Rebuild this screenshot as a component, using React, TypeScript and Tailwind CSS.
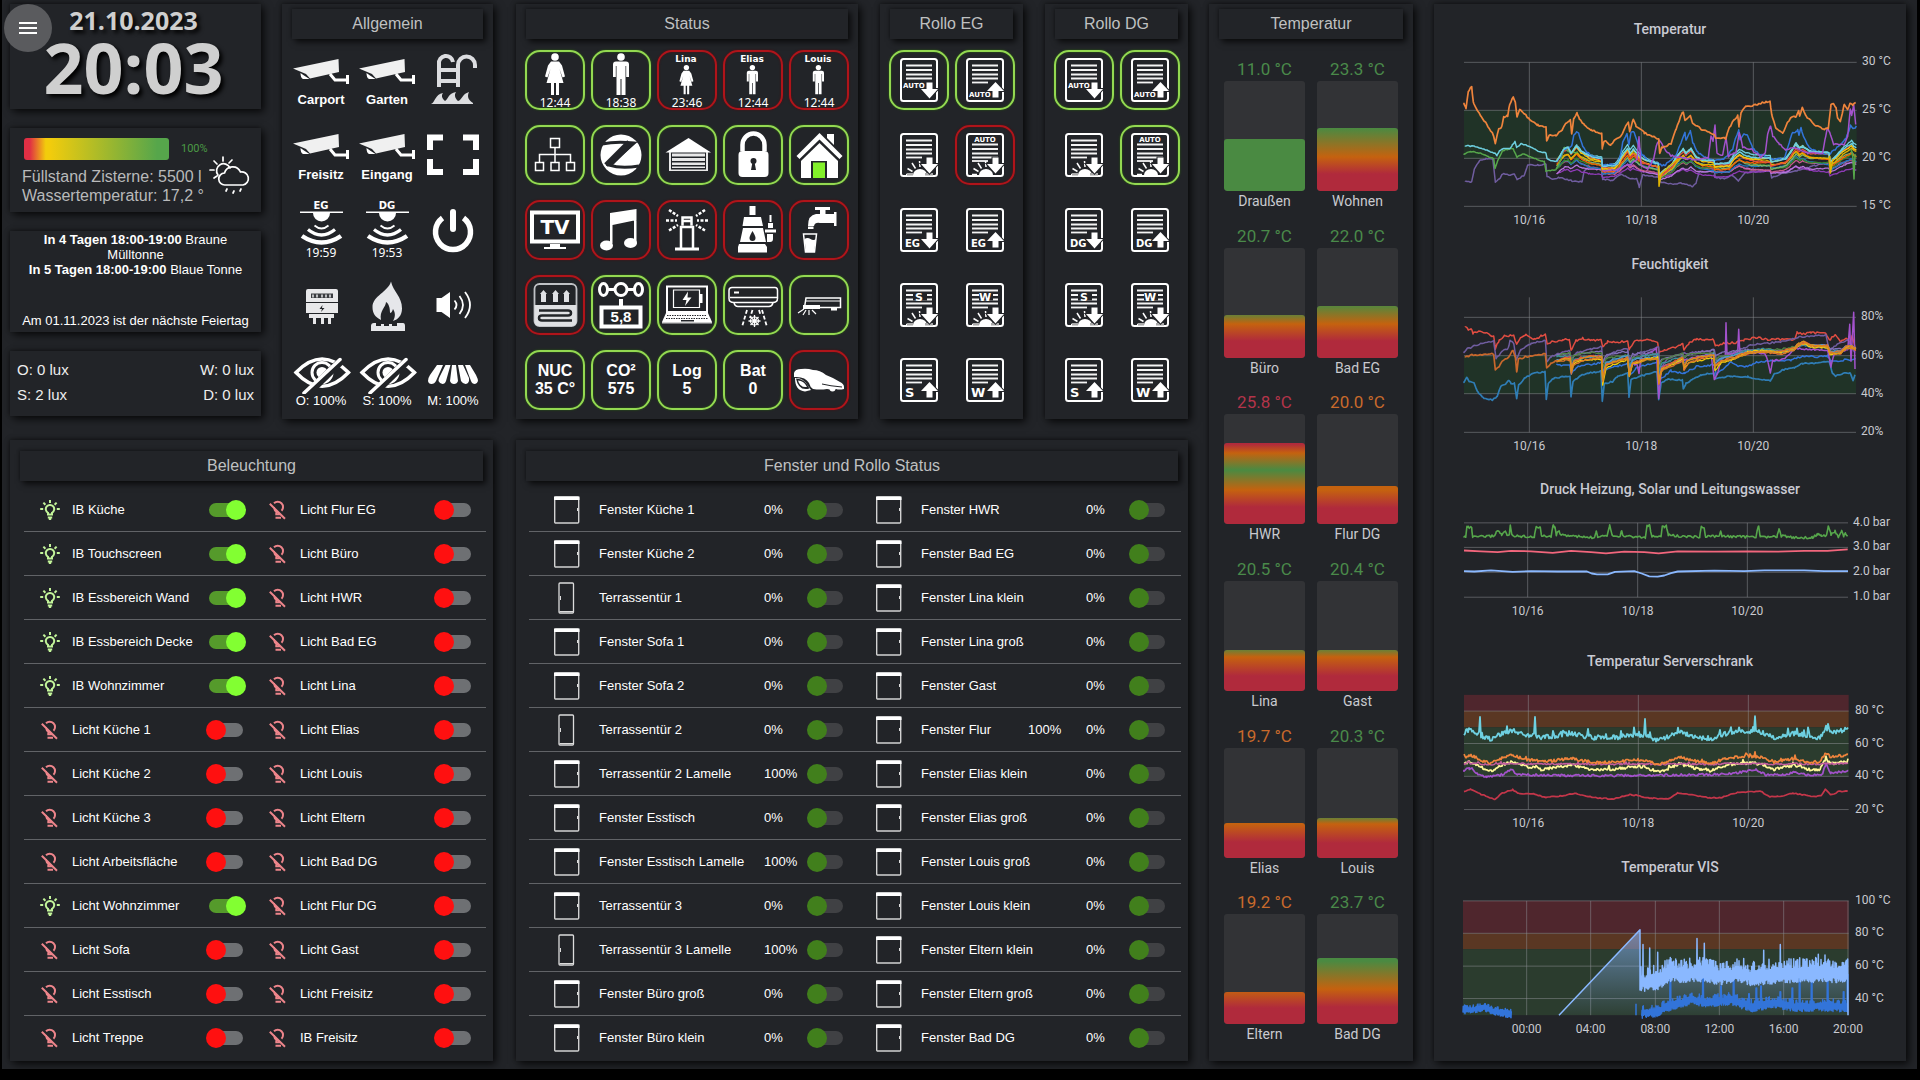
import React from "react";

type Pt = [number, number];

/* ---------- shared pieces ---------- */

const PANEL = "bg-[#222428] shadow-[3px_3px_8px_rgba(0,0,0,0.75),-1px_-1px_4px_rgba(0,0,0,0.35)]";

function Heading({ children }: { children: React.ReactNode }) {
  return (
    <h2 className="mx-2.5 flex h-[30px] items-center justify-center text-base leading-5 text-[#bfc0c1] shadow-[3px_3px_6px_rgba(0,0,0,0.7),-1px_-1px_3px_rgba(0,0,0,0.3)]">
      {children}
    </h2>
  );
}

function Art({ children, h = 60 }: { children: React.ReactNode; h?: number }) {
  return (
    <svg viewBox={`0 0 60 ${h}`} width="60" height={h} fill="#fff" className="block shrink-0" aria-hidden="true">
      {children}
    </svg>
  );
}

/* ---------- Allgemein icons ---------- */

function Camera() {
  return (
    <Art h={40}>
      <path d="M2 15.500 47.500 6 48 19 19 25.500 15 21Z" fill="#f0f0f0" />
      <path d="M9.500 20 13 22.500 18.500 26H12Q9.500 25 9.500 20Z" />
      <path d="m39 21 5 6h11" fill="none" stroke="#fff" strokeWidth="3" />
      <path d="M55 22h3v9h-3z" />
    </Art>
  );
}

function PoolLadder() {
  return (
    <Art>
      <g fill="none" stroke="#dcdde0" strokeWidth="4">
        <path d="M16 37V14a7 7 0 0 1 14-2M35 37V15a8.500 8.500 0 0 1 17 0v3M16 20h19M16 31h19" />
      </g>
      <path
        fill="#dcdde0"
        d="M8 54c4-1 4-10 12-11-2 3-1 5 2 8 3-1 3-8 11-9-2 3-1 6 2 9 4-1 4-7 11-9-2 4-1 8 4 11v1z"
      />
    </Art>
  );
}

function Fullscreen() {
  return (
    <Art>
      <path d="M4 25V9.500h16v6H10V25zM56 25V9.500H40v6h10V25zM4 34v16h16v-6H10V34zM56 34v16H40v-6h10V34z" />
    </Art>
  );
}

function Power() {
  return (
    <Art>
      <g fill="none" stroke="#fff">
        <path d="M19.500 18a17.500 17.500 0 1 0 21 0" strokeWidth="5.500" />
        <path d="M30 12v17" strokeWidth="6" strokeLinecap="round" />
      </g>
    </Art>
  );
}

function Motion({ label, time }: { label: string; time: string }) {
  return (
    <Art>
      <text x="30" y="9" textAnchor="middle" fontSize="10" className="font-['DejaVu_Sans'] font-bold">{label}</text>
      <path d="M9 11.500h43v1.500H9z" />
      <path d="M22 13h17a8.500 8.500 0 0 1-17 0z" />
      <g fill="none" stroke="#fff">
        <path d="M23.500 25.500q7 6 14 0" strokeWidth="1.800" />
        <path d="M17 29.500q13.500 11 27 0" strokeWidth="3.200" />
        <path d="M11 36q19.500 13 39 0" strokeWidth="4.500" />
      </g>
      <text x="30" y="57" textAnchor="middle" fontSize="12" className="font-['Noto_Sans']">{time}</text>
    </Art>
  );
}

function Meter() {
  return (
    <Art>
      <g fill="#e8e8ea">
        <path d="M15 16q0-2 2-2h28q2 0 2 2v11H15zM15 28h32v10H15zM18 39h25v4H18zM22 43h3v6h-3zM30 43h3v6h-3zM37 43h3v6h-3z" />
      </g>
      <path d="M20 18.500h22v4.500H20z" fill="#3a3c40" />
      <path d="M22 19.500v3M26 19.500v3M31 19.500v3M35 19.500v3M39 19.500v3" stroke="#e8e8ea" strokeWidth="1.500" />
      <path d="m31.500 30-3 4h2.500l-1 3 3.500-4H31z" fill="#222428" />
    </Art>
  );
}

function Flame() {
  return (
    <Art>
      <g fill="#e6e7ea">
        <path d="M34 6.500c2 10 11 15 11 27 0 7-4 11-9 12.500 3-5 2-9 0-12-1 3-2 4-3 4 0-5-1-9-4-11 0 5-7 9-5 18C18 42 15.500 38 15.500 32 15.500 21 31 17 34 6.500z" />
        <path d="M14 56v-5q0-3 3-3h2v3h5v-2h3v2h5v-2h3v2h5v-3h6q2 0 2 3v5z" />
      </g>
    </Art>
  );
}

function Speaker() {
  return (
    <Art>
      <path d="M13.500 23h5L27 17v26l-8.500-6h-5z" />
      <g fill="none" stroke="#fff" strokeWidth="1.800">
        <path d="M31.500 25.500q4 4.500 0 9M36.500 21q7 9 0 18M42 17q10 13 0 26" />
      </g>
    </Art>
  );
}

function EyeOff() {
  return (
    <Art h={42}>
      <path d="M5 20.500Q31 -6.500 57.500 20.500 31 48 5 20.500z" fill="none" stroke="#fff" strokeWidth="3.500" />
      <circle cx="31" cy="20.500" r="10" fill="none" stroke="#fff" strokeWidth="3" />
      <circle cx="31" cy="20.500" r="5.500" />
      <path d="M51 8 15 43" stroke="#222428" strokeWidth="8" />
      <path d="m49 7.500-36 33.500" stroke="#fff" strokeWidth="3.500" strokeLinecap="round" />
    </Art>
  );
}

function Awning() {
  return (
    <Art h={42}>
      <path d="M14 13h6L13 29q-1.500 3-4.500 3T5 29q0-3 2-6zM22.500 13h5L23 29q-1 3-3.500 3T15.500 29q0-2 1-4zM29 13h4l2 16q-1 3-4 3t-4-3zM35 13h5l6 13v3q-1 3-3.500 3T38 29zM42 13h5l6 10q2 4 2 6-1 3-3 3-3 0-4-3z" />
    </Art>
  );
}

/* ---------- Status icons ---------- */

function Woman() {
  return (
    <g>
      <circle cx="30" cy="7" r="3.800" />
      <path d="M26 11.500h8l3 4 3 11-2.500 1L34.500 19l4 14h-4.500v12h-3V33h-2v12h-3V33h-4.500l4-14-3 8.500-2.500-1 3-11z" />
    </g>
  );
}

function Man() {
  return (
    <g>
      <circle cx="30" cy="7" r="3.800" />
      <path d="M25 11.500h10q3 0 3 3V27h-2.800V16H34.500v29h-4V29h-1v16h-4V16h-.700v11H22V14.500q0-3 3-3z" />
    </g>
  );
}

function Person({ kind, name, time }: { kind: "w" | "m"; name?: string; time: string }) {
  const body = kind === "w" ? <Woman /> : <Man />;
  return (
    <Art>
      {name ? (
        <>
          <text x="29" y="12" textAnchor="middle" fontSize="9" className="font-['DejaVu_Sans'] font-bold">{name}</text>
          <g transform="translate(8.400 12.700) scale(.7)">{body}</g>
        </>
      ) : (
        body
      )}
      <text x="30" y="57" textAnchor="middle" fontSize="12" className="font-['Noto_Sans']">{time}</text>
    </Art>
  );
}

function Network() {
  return (
    <Art>
      <g fill="none" stroke="#fff" strokeWidth="1.500">
        <path d="M25.500 13.500h9v9h-9zM10.500 37.500h8v8h-8zM26 37.500h8v8h-8zM41.500 37.500h8v8h-8zM30 22.500v15M14.500 37.500v-8h31v8" />
      </g>
    </Art>
  );
}

function Zigbee() {
  return (
    <Art>
      <circle cx="30" cy="30" r="20.500" />
      <path d="M11 19q14-3 32-1L18 40q12 4 30 1" fill="none" stroke="#222428" strokeWidth="3" />
      <path d="M39 17.500h6L21 41h-6z" fill="#222428" />
      <path d="M38 17 15 40" stroke="#222428" strokeWidth="5" />
    </Art>
  );
}

function Garage() {
  return (
    <Art>
      <path d="M8.500 27.500 31.500 13 54 27.500z" />
      <path d="M12 27h2v19h-2zM49 27h2v19h-2zM15 28.500h33v3H15zM15 33h33v3H15zM15 37.500h33v2.500H15zM15 41.500h33v1.500H15zM14 44.500h35V46H14z" fill="#e8e8e8" />
    </Art>
  );
}

function Lock() {
  return (
    <Art>
      <path d="M19.500 26V20a10.500 11 0 0 1 22 0v6" fill="none" stroke="#fff" strokeWidth="4.500" />
      <rect x="15.500" y="26" width="30" height="26" rx="4" />
      <circle cx="30.500" cy="36" r="3" fill="#222428" />
      <path d="M29.500 37h2l1.500 8h-5z" fill="#222428" />
    </Art>
  );
}

function House() {
  return (
    <Art>
      <path d="m7.500 31 23-23 23 23-3 3-20-19.500-20 19.500z" />
      <path d="M38 9h7v11l-7-7z" />
      <path d="m12 36 18.500-18L49 36v17H12z" />
      <path d="M22 36h16v17H22z" fill="#222428" />
      <path d="M24 37.500h12V53H24z" fill="#82f02a" />
    </Art>
  );
}

function Tv() {
  return (
    <Art>
      <path d="M7 12.500h46v29H7z" fill="none" stroke="#fff" strokeWidth="4" />
      <text x="30" y="33.500" textAnchor="middle" fontSize="20" className="font-['DejaVu_Sans'] font-bold">TV</text>
      <path d="M25 44h10v3h6v2H19v-2h6z" />
    </Art>
  );
}

function Music() {
  return (
    <Art>
      <path d="M19 13 45.500 9v11L21.500 25v18H19zM43 18h2.500v26H43z" />
      <ellipse cx="15.500" cy="45.500" rx="6.500" ry="5" />
      <ellipse cx="39.500" cy="43" rx="6.500" ry="5" />
    </Art>
  );
}

function GardenLamp() {
  return (
    <Art>
      <g fill="none" stroke="#fff">
        <path d="M24 49V27h12v22M25.500 25.500v-8h9v8M25.500 21h9" strokeWidth="2.500" />
        <path d="M18 49h24" strokeWidth="3" />
        <path d="m12 10 9 6M9 20.500h11M12 30.500l9-5.500M48 10l-9 6M51 20.500H40M48 30.500 39 25" strokeWidth="2.500" strokeDasharray="3 1.500" />
      </g>
    </Art>
  );
}

function Pump() {
  return (
    <Art>
      <path d="M26.500 6h6v9h-6zM21 17h17l2 9H19.500zM20 28h20l3 14H17zM16 44h26l2 3v5.500H15v-5.500z" />
      <path d="M29.500 31q-3 5-3 7a3 3 0 0 0 6 0q0-2-3-7z" fill="#222428" />
      <path d="M46.500 15h2v7h-2zM45 23h5v5h-5zM42 29.500h11v3H42zM44 34h6v5q0 3-3 3h-3z" />
    </Art>
  );
}

function Tap() {
  return (
    <Art>
      <path d="M26 7h15v3h-4.500v4H45v-2h2.500v14H45v-3H31q-5-1-6 3h-6q0-11 8-12h4v-4h-5zM19 26.500h5.500V29H19z" />
      <path d="m14.500 34 2 18h9l2-18z" fill="none" stroke="#fff" strokeWidth="1.500" />
      <path d="M15.500 39q3-2 6 0t5.500 0l-2 13h-8z" />
    </Art>
  );
}

function FloorHeating() {
  return (
    <Art>
      <rect x="9.500" y="9" width="42" height="42" rx="5" fill="none" stroke="#bfc1c5" strokeWidth="1.800" />
      <path d="M9.500 30h42v16q0 5-5 5h-32q-5 0-5-5z" fill="#dfe0e3" />
      <path d="M14 35.500h29q3 0 3 2.500t-3 2.500H17q-3 0-3 2.500t3 2.500h30" fill="none" stroke="#222428" strokeWidth="2.500" />
      <path d="m18.500 15 3.500 4h-1v8h-5v-8h-1zM30.500 15l3.500 4h-1v8h-5v-8h-1zM41.500 15l3.500 4h-1v8h-5v-8h-1z" fill="#dfe0e3" />
    </Art>
  );
}

function WaterHardness() {
  return (
    <Art>
      <g fill="none" stroke="#fff">
        <ellipse cx="12.500" cy="14.500" rx="4" ry="6" strokeWidth="3" />
        <circle cx="30" cy="14.500" r="6" strokeWidth="3" />
        <ellipse cx="47.500" cy="14.500" rx="4" ry="6" strokeWidth="3" />
        <path d="M16 14.500h8M36 14.500h8" strokeWidth="3" />
        <path d="M10.500 32.500h39v19h-39z" strokeWidth="4" />
      </g>
      <path d="M28 24h4v7h-4z" />
      <text x="30" y="47" textAnchor="middle" fontSize="15" className="font-['Liberation_Sans'] font-bold">5,8</text>
    </Art>
  );
}

function Laptop() {
  return (
    <Art>
      <g fill="none" stroke="#fff">
        <path d="M10 37V11.500h40V37z" strokeWidth="2" />
        <path d="M16.500 15h26v17.500h-26z" strokeWidth="1.200" />
      </g>
      <path d="M43 19h2.500v9H43zM31 16.500 25.500 25h4L28 31l6.500-8.500h-4z" />
      <path d="M9 38h42l4 9H5z" />
      <path d="M10 40.500h40M9 43.500h42" stroke="#222428" strokeWidth="1" strokeDasharray="1.500 1" />
      <path d="M24 45h13v1.500H24z" fill="#222428" />
      <path d="M5 47h50v1.500H5z" fill="#d0d0d0" />
    </Art>
  );
}

function AirCon() {
  return (
    <Art>
      <g fill="none" stroke="#fff" strokeWidth="1.500">
        <path d="M9 12.500h43q2.500 0 2.500 3v8q0 4-5 4H11q-5 0-5-4v-8q0-3 3-3zM7 22.500h47M11 28q1 3.500 4 3.500h31q3 0 4-3.500" />
        <path d="m24 35-5 17M29.500 35 27 43M36 35l1.500 5M39 35l5 17" strokeDasharray="4 2" strokeWidth="1.800" />
        <path d="M31.500 40v12M25.500 46h12M27.500 42l8 8M35.500 42l-8 8" strokeWidth="1.300" />
        <circle cx="31.500" cy="46" r="4" strokeWidth="1.200" />
      </g>
      <path d="M11 16.500h5v2h-5z" />
    </Art>
  );
}

function Vacuum() {
  return (
    <Art>
      <g fill="none" stroke="#fff" strokeWidth="1.500">
        <path d="M17 23h34.500v9.500H15.500z" />
        <path d="M17 26h34" strokeWidth="1" />
      </g>
      <path d="M14 30h17v4H14zM42 33h6v2.500h-6z" />
      <path d="m15 34-6 4M17 35l-3 5M20 35v5M23 35l4 4" stroke="#fff" strokeWidth="1.200" />
    </Art>
  );
}

function Mower() {
  return (
    <Art>
      <path d="M5 27V23q1-4 7-4 6-1 12 1 7 0 13 5 8 3 14 7 4 2 4 5v2q-5 1-8 0l-3 1-6-1q-7 1-14 0-3-2-4-6-4-7-15-6z" />
      <path d="M6 28q8-1 13 8l3 4-6 1.500q-10-1-10-13.500z" />
      <path d="M7 28.500q9 0 13.500 10-11 3-13.500-10z" fill="#222428" />
      <path d="M9 30.500q6 0 9 6.500-7 1-9-6.500z" />
      <circle cx="43.500" cy="38.500" r="3" />
      <path d="M33 34q8 2 20 3" fill="none" stroke="#222428" strokeWidth="1" />
    </Art>
  );
}

/* ---------- Rollo icons ---------- */

type RolloKind = { dir: "up" | "down"; text?: string; place?: "mid" | "low" | "top" | "lines"; sun?: boolean };

function Rollo({ dir, text, place = "low", sun }: RolloKind) {
  const top = place === "top";
  const y0 = top ? 19.5 : 15.5;
  const bold = "font-['DejaVu_Sans'] font-bold";
  const auto = text === "AUTO";
  return (
    <Art>
      <rect x="12" y="9" width="36" height="42" rx="2.500" fill="none" stroke="#fff" strokeWidth="2" />
      <g stroke="#f4f4f4" strokeWidth="1.800">
        <path d={`M17 ${y0}h26M17 ${y0 + 4.5}h26M17 ${y0 + 9}h26M17 ${y0 + 13}h26`} />
        {place !== "mid" && !top && <path d={`M17 ${y0 + 17}h16`} />}
        {top && <path d="M17 36h16" />}
      </g>
      {sun && (
        <g>
          <path d="M24 50a7 6 0 0 1 14 0z" />
          <path d="m31 42-.500-6M26.500 43.500 23 38M23.500 46.500l-5-3M22 49.500h-5" stroke="#fff" strokeWidth="1.500" />
          {!top && <path d="M18 48h6v2.500h-6zM36 48h8v2.500h-8z" fill="#aaa" />}
        </g>
      )}
      {place === "lines" && (
        <>
          <path d="M24 17.500h14v8H24z" fill="#222428" />
          <text x="30" y="26" textAnchor="middle" fontSize="11" className={bold}>{text}</text>
        </>
      )}
      {top && <text x="30" y="16.500" textAnchor="middle" fontSize="7" className={bold}>{text}</text>}
      {place === "mid" && <text x="14" y="38" fontSize="7" className={bold}>{text}</text>}
      {place === "low" && text && (
        <text x={auto ? 14 : 16} y="47" fontSize={auto ? 7 : text.length > 1 ? 10 : 13} className={bold}>
          {text}
        </text>
      )}
      <path
        d={
          dir === "down"
            ? "M37.500 32.500h6V39H49l-8.500 9.500L32 39h5.500z"
            : "M37.500 47.500h6V41H49l-8.500-9L32 41h5.500z"
        }
        stroke="#222428"
        strokeWidth="2"
        paintOrder="stroke"
      />
    </Art>
  );
}

/* ---------- tiles ---------- */

type Tone = "green" | "red" | "none";
const TONES: Record<Tone, string> = {
  green: "border-2 border-[#93d951] shadow-[0_0_2px_#2c6b0c,inset_0_0_2px_#2c6b0c]",
  red: "border-2 border-[#b0141a] shadow-[0_0_2px_#5a0c10,inset_0_0_2px_#5a0c10]",
  none: "border-2 border-transparent",
};

function Tile({ tone, label, children }: { tone: Tone; label: string; children: React.ReactNode }) {
  return (
    <button
      type="button"
      aria-label={label}
      className={`flex size-[60px] flex-col items-center justify-center rounded-[15px] text-white ${TONES[tone]}`}
    >
      {children}
    </button>
  );
}

const general: [string, React.ReactNode, string?, string?][] = [
  ["Carport", <Camera />, "Carport", "font-bold"],
  ["Garten", <Camera />, "Garten", "font-bold"],
  ["Pool", <PoolLadder />],
  ["Freisitz", <Camera />, "Freisitz", "font-bold"],
  ["Eingang", <Camera />, "Eingang", "font-bold"],
  ["Vollbild", <Fullscreen />],
  ["Bewegung EG", <Motion label="EG" time="19:59" />],
  ["Bewegung DG", <Motion label="DG" time="19:53" />],
  ["Power", <Power />],
  ["Strom", <Meter />],
  ["Gas", <Flame />],
  ["Lautstärke", <Speaker />],
  ["Jalousie O", <EyeOff />, "O: 100%"],
  ["Jalousie S", <EyeOff />, "S: 100%"],
  ["Markise", <Awning />, "M: 100%"],
];

function TwoLines({ a, b }: { a: string; b: string }) {
  return (
    <span className="text-base leading-[18px] font-bold whitespace-nowrap">
      {a}
      <br />
      {b}
    </span>
  );
}

const status: [string, Tone, React.ReactNode][] = [
  ["Frau", "green", <Person kind="w" time="12:44" />],
  ["Mann", "green", <Person kind="m" time="18:38" />],
  ["Lina", "red", <Person kind="w" name="Lina" time="23:46" />],
  ["Elias", "red", <Person kind="m" name="Elias" time="12:44" />],
  ["Louis", "red", <Person kind="m" name="Louis" time="12:44" />],
  ["Netzwerk", "green", <Network />],
  ["Zigbee", "green", <Zigbee />],
  ["Garage", "green", <Garage />],
  ["Schloss", "green", <Lock />],
  ["Haustür", "green", <House />],
  ["TV", "red", <Tv />],
  ["Musik", "red", <Music />],
  ["Gartenlicht", "red", <GardenLamp />],
  ["Pumpe", "red", <Pump />],
  ["Wasser", "red", <Tap />],
  ["Fußbodenheizung", "red", <FloorHeating />],
  ["Wasserhärte", "green", <WaterHardness />],
  ["Laptop", "green", <Laptop />],
  ["Klima", "green", <AirCon />],
  ["Saugroboter", "green", <Vacuum />],
  ["NUC", "green", <TwoLines a="NUC" b="35 C°" />],
  ["CO²", "green", <TwoLines a="CO²" b="575" />],
  ["Log", "green", <TwoLines a="Log" b="5" />],
  ["Batterie", "green", <TwoLines a="Bat" b="0" />],
  ["Mähroboter", "red", <Mower />],
];

function RolloPanel({ floor, sunTone }: { floor: string; sunTone: Tone }) {
  const items: [string, Tone, RolloKind][] = [
    ["Auto ab", "green", { dir: "down", text: "AUTO", place: "mid" }],
    ["Auto auf", "green", { dir: "up", text: "AUTO" }],
    ["Sonne ab", "none", { dir: "down", sun: true }],
    ["Sonne Auto", sunTone, { dir: "down", text: "AUTO", place: "top", sun: true }],
    ["Alle ab", "none", { dir: "down", text: floor }],
    ["Alle auf", "none", { dir: "up", text: floor }],
    ["Süd Sonne", "none", { dir: "down", text: "S", place: "lines", sun: true }],
    ["West Sonne", "none", { dir: "down", text: "W", place: "lines", sun: true }],
    ["Süd auf", "none", { dir: "up", text: "S" }],
    ["West auf", "none", { dir: "up", text: "W" }],
  ];
  return (
    <section className={`${PANEL} pt-[5px] pb-[9px]`}>
      <Heading>Rollo {floor}</Heading>
      <div className="mt-[11px] grid grid-cols-[60px_60px] justify-center gap-x-1.5 gap-y-[15px]">
        {items.map(([n, tone, k]) => (
          <Tile key={n} tone={tone} label={`${n} ${floor}`}>
            <Rollo {...k} />
          </Tile>
        ))}
      </div>
    </section>
  );
}

/* ---------- left column ---------- */

function Weather() {
  return (
    <svg viewBox="0 0 42 40" width="42" height="40" fill="none" stroke="#fff" strokeWidth="1.700" strokeLinecap="round" aria-hidden="true">
      <path d="M9 19a7 7 0 1 1 12-7M14 1v4M5 5l3 3M23 4l-3 3M1 14h4M5 22l3-2" />
      <path d="M16 29a6 6 0 0 1-.500-12 8.500 8.500 0 0 1 16-1A6.500 6.500 0 0 1 34 29z" />
      <path d="m18 33-1 2M25 35l-1 2M32 33l-1 2" />
    </svg>
  );
}

function LeftColumn() {
  return (
    <div className="flex flex-col gap-[19px]">
      <section className={`${PANEL} h-[105px] pr-1 text-center font-['Open_Sans'] font-bold text-[#cfcfcf] [text-shadow:3px_3px_4px_#000]`}>
        <div className="text-[25px] leading-8">21.10.2023</div>
        <div className="text-[70px] leading-[62px]">20:03</div>
      </section>

      <section className={`${PANEL} h-[84px] pt-2.5 pr-2.5 pl-3 text-[#b9babb]`}>
        <div className="flex items-center gap-3 pl-0.5">
          <div className="h-[22px] w-[145px] rounded-[3px] bg-[linear-gradient(to_right,#e02f44_4%,#f2cc0c_15%,#f2cc0c_18%,#56a64b_92%)]" />
          <span className="font-['Roboto'] text-[11px] text-[#4b9a45]">100%</span>
        </div>
        <div className="flex">
          <p className="mt-[7px] flex-1 text-base leading-[19px] whitespace-nowrap">
            Füllstand Zisterne: 5500 l<br />
            Wassertemperatur: 17,2 °
          </p>
          <div className="-mt-1 shrink-0">
            <Weather />
          </div>
        </div>
      </section>

      <section className={`${PANEL} flex h-[101px] flex-col justify-between pt-px pb-1 text-center text-[13px] leading-[15px] whitespace-nowrap text-white`}>
        <p>
          <b>In 4 Tagen 18:00-19:00</b> Braune
          <br />
          Mülltonne
          <br />
          <b>In 5 Tagen 18:00-19:00</b> Blaue Tonne
        </p>
        <p>Am 01.11.2023 ist der nächste Feiertag</p>
      </section>

      <section className={`${PANEL} grid h-[65px] grid-cols-2 content-center px-[7px] pb-1 text-[15px] leading-[25px] text-[#eee]`}>
        <span>O: 0 lux</span>
        <span className="text-right">W: 0 lux</span>
        <span>S: 2 lux</span>
        <span className="text-right">D: 0 lux</span>
      </section>
    </div>
  );
}

/* ---------- lighting and windows ---------- */

function BulbOn() {
  return (
    <svg viewBox="0 0 20 20" width="20" height="20" fill="none" stroke="#c3f59a" strokeWidth="2" aria-hidden="true">
      <path d="M8 14.500v-1.700a4.200 4.200 0 1 1 4 0v1.700zM7.800 17.500h4.400M8.800 19h2.400M10 0v3M3.400 2.600l2 2.100M16.600 2.600l-2 2.100M.200 9h3M16.800 9h3" />
    </svg>
  );
}

function BulbOff() {
  return (
    <svg viewBox="0 0 20 20" width="20" height="20" fill="none" stroke="#ee858b" strokeWidth="2" aria-hidden="true">
      <path d="M6 3.300a5.200 5.200 0 1 1 7.500 7.400M6 7.500q.500 3 2.300 4.200v2.600h4M7.500 17.800h5.500M1.800 3.800l15.200 15" />
    </svg>
  );
}

function Switch({ on, kind }: { on?: boolean; kind: "light" | "window" }) {
  const base =
    "relative block h-5 w-10 shrink-0 appearance-none before:absolute before:inset-[3px] before:rounded-full after:absolute after:top-0 after:size-5 after:rounded-full";
  const tone =
    kind === "window"
      ? "before:right-1 before:bg-[#404144] after:left-0 after:bg-[#417f1c]"
      : on
        ? "before:bg-[#559a2b] after:right-0 after:bg-[#82ff32]"
        : "before:bg-[#6e7073] after:left-0 after:bg-[#ff1010]";
  return <input type="checkbox" role="switch" defaultChecked={!!on} className={`${base} ${tone}`} />;
}

const lights: [string, boolean, string][] = [
  ["IB Küche", true, "Licht Flur EG"],
  ["IB Touchscreen", true, "Licht Büro"],
  ["IB Essbereich Wand", true, "Licht HWR"],
  ["IB Essbereich Decke", true, "Licht Bad EG"],
  ["IB Wohnzimmer", true, "Licht Lina"],
  ["Licht Küche 1", false, "Licht Elias"],
  ["Licht Küche 2", false, "Licht Louis"],
  ["Licht Küche 3", false, "Licht Eltern"],
  ["Licht Arbeitsfläche", false, "Licht Bad DG"],
  ["Licht Wohnzimmer", true, "Licht Flur DG"],
  ["Licht Sofa", false, "Licht Gast"],
  ["Licht Esstisch", false, "Licht Freisitz"],
  ["Licht Treppe", false, "IB Freisitz"],
];

function LightCell({ name, on }: { name: string; on: boolean }) {
  return (
    <label className="flex items-center pr-1.5 pl-4">
      {on ? <BulbOn /> : <BulbOff />}
      <span className="ml-3 flex-1 whitespace-nowrap">{name}</span>
      <Switch on={on} kind="light" />
    </label>
  );
}

const windows: [string, string, string, boolean?, string?][] = [
  ["Fenster Küche 1", "0%", "Fenster HWR"],
  ["Fenster Küche 2", "0%", "Fenster Bad EG"],
  ["Terrassentür 1", "0%", "Fenster Lina klein", true],
  ["Fenster Sofa 1", "0%", "Fenster Lina groß"],
  ["Fenster Sofa 2", "0%", "Fenster Gast"],
  ["Terrassentür 2", "0%", "Fenster Flur", true, "100%"],
  ["Terrassentür 2 Lamelle", "100%", "Fenster Elias klein"],
  ["Fenster Esstisch", "0%", "Fenster Elias groß"],
  ["Fenster Esstisch Lamelle", "100%", "Fenster Louis groß"],
  ["Terrassentür 3", "0%", "Fenster Louis klein"],
  ["Terrassentür 3 Lamelle", "100%", "Fenster Eltern klein", true],
  ["Fenster Büro groß", "0%", "Fenster Eltern groß"],
  ["Fenster Büro klein", "0%", "Fenster Bad DG"],
];

function WindowCell({ name, pct, door, extra }: { name: string; pct: string; door?: boolean; extra?: string }) {
  return (
    <label className="flex items-center pr-1 pl-6">
      <svg viewBox="0 0 27 32" width="27" height="32" fill="none" aria-hidden="true">
        {door ? (
          <>
            <rect x="6" y="1" width="14.500" height="30" rx="1" stroke="#dcdcdc" strokeWidth="1.300" />
            <path d="M6.500 29.500h14M7.500 14v4" stroke="#dcdcdc" />
          </>
        ) : (
          <>
            <rect x="1.700" y="3" width="24" height="26" rx="1" stroke="#d2d2d2" strokeWidth="1.400" />
            <path d="M1 2.500h25.500v3.500H1z" fill="#fff" />
            <path d="M24.500 14v3" stroke="#ddd" />
          </>
        )}
      </svg>
      <span className="ml-[19px] flex-1 whitespace-nowrap">{name}</span>
      {extra && <span className="w-[58px]">{extra}</span>}
      <span className="w-[43px]">{pct}</span>
      <Switch kind="window" />
    </label>
  );
}

const LIST = "mt-[7px] text-[13px] leading-4 text-white divide-y divide-[#616367]";

/* ---------- temperature gauges ---------- */

const GREEN = "text-[#4a8a4a]";
const ORANGE = "text-[#c96a2c]";
const RED = "text-[#b4344a]";
const gauges: [string, string, number, string][] = [
  ["Draußen", "11.0 °C", 52, GREEN],
  ["Wohnen", "23.3 °C", 63, GREEN],
  ["Büro", "20.7 °C", 43, GREEN],
  ["Bad EG", "22.0 °C", 52, GREEN],
  ["HWR", "25.8 °C", 81, RED],
  ["Flur DG", "20.0 °C", 38, ORANGE],
  ["Lina", "20.5 °C", 41, GREEN],
  ["Gast", "20.4 °C", 41, GREEN],
  ["Elias", "19.7 °C", 35, ORANGE],
  ["Louis", "20.3 °C", 40, GREEN],
  ["Eltern", "19.2 °C", 32, ORANGE],
  ["Bad DG", "23.7 °C", 66, GREEN],
];

const FILLS: Record<string, string> = {
  Draußen: "bg-[#4a8a42]",
  Wohnen: "bg-[linear-gradient(to_top,#b02a3c_17px,#c5620f_34px,#4a8a42_63px)]",
  "Bad DG": "bg-[linear-gradient(to_top,#b02a3c_17px,#c5620f_35px,#4a8a42_63px)]",
  "Bad EG": "bg-[linear-gradient(to_top,#b02a3c_17px,#c5620f_34px,#5c853a_51px)]",
  Büro: "bg-[linear-gradient(to_top,#b02a3c_17px,#c5620f_34px,#6a8036_43px)]",
  Lina: "bg-[linear-gradient(to_top,#b02a3c_15px,#c5620f_34px,#6a8036_41px)]",
  Gast: "bg-[linear-gradient(to_top,#b02a3c_15px,#c5620f_34px,#6a8036_41px)]",
  Louis: "bg-[linear-gradient(to_top,#b02a3c_15px,#c5620f_34px,#6a8036_40px)]",
  HWR: "bg-[linear-gradient(to_top,#b02a3c_17px,#c5620f_34px,#4a8a42_54px,#c5620f_71px,#b02a3c_80px)]",
};

function Gauges() {
  return (
    <section className={`${PANEL} flex flex-col pt-[5px] pb-1.5`}>
      <Heading>Temperatur</Heading>
      <div className="mt-4 grid flex-1 auto-rows-fr grid-cols-2 gap-x-3 px-[15px] text-center font-['Roboto']">
        {gauges.map(([name, value, h, tone]) => (
          <div key={name} className="pt-1">
            <div className={`pb-0.5 text-[17px] leading-5 ${tone}`}>{value}</div>
            <div className="flex h-[110px] items-end overflow-hidden rounded-[3px] bg-[#323336]">
              <div
                className={`w-full rounded-[3px] ${FILLS[name] ?? "bg-[linear-gradient(to_top,#b02a3c_16px,#c5620f_34px)]"}`}
                style={{ height: h }}
              />
            </div>
            <div className="text-sm leading-5 text-[#c9cacf]">{name}</div>
          </div>
        ))}
      </div>
    </section>
  );
}

/* ---------- charts ---------- */

function rnd(i: number, seed: number) {
  const v = Math.sin(i * 12.9898 + seed * 78.233) * 43758.5453;
  return v - Math.floor(v) - 0.5;
}

function at(pts: Pt[], x: number) {
  for (let i = 1; i < pts.length; i++) {
    if (x <= pts[i][0]) {
      const [x0, y0] = pts[i - 1];
      const [x1, y1] = pts[i];
      return x1 === x0 ? y1 : y0 + ((y1 - y0) * (x - x0)) / (x1 - x0);
    }
  }
  return pts[pts.length - 1][1];
}

function parse(s: string): Pt[] {
  return s.split(" ").map((p) => p.split(",").map(Number) as Pt);
}

function rough(pts: Pt[], amp: number, seed: number, step = 5): Pt[] {
  const out: Pt[] = [];
  const end = pts[pts.length - 1][0];
  const xs = pts.map((p) => p[0]);
  for (let x = pts[0][0]; x < end; x += step) xs.push(x);
  xs.sort((a, b) => a - b);
  xs.forEach((x, i) => out.push([x, at(pts, x) + rnd(i, seed) * amp]));
  return out;
}

type Scale = { oy: number; sy: number };

function toPath(pts: Pt[], s: Scale) {
  return pts.map(([x, y]) => `${(x / 3 - 3).toFixed(1)},${(y / s.sy - s.oy).toFixed(1)}`).join(" ");
}

function Line({ pts, s, c, w = 1.5 }: { pts: Pt[]; s: Scale; c: string; w?: number }) {
  return <polyline points={toPath(pts, s)} fill="none" stroke={c} strokeWidth={w} strokeLinejoin="round" />;
}

type ChartProps = {
  title: string;
  height: number;
  s: Scale;
  x: [number, number];
  top: number;
  bottom: number;
  rows: [number, string][];
  cols: [number, string][];
  bands: [number, number, string][];
  labelX: number;
  labelY: number;
  children: React.ReactNode;
};

function Chart({ title, height, s, x, top, bottom, rows, cols, bands, labelX, labelY, children }: ChartProps) {
  const X = (v: number) => v / 3 - 3;
  const Y = (v: number) => v / s.sy - s.oy;
  return (
    <figure>
      <figcaption className="text-center text-sm leading-5 font-medium text-[#c9cad3]">{title}</figcaption>
      <svg viewBox={`0 0 472 ${height}`} className="block w-full" role="img" aria-label={title}>
        {bands.map(([a, b, c]) => (
          <rect key={a} x={X(x[0])} width={X(x[1]) - X(x[0])} y={Y(a)} height={Y(b) - Y(a)} fill={c} />
        ))}
        <g stroke="#8f9196" strokeOpacity=".5" strokeWidth="1">
          {rows.map(([y]) => (
            <line key={y} x1={X(x[0])} x2={X(x[1])} y1={Y(y)} y2={Y(y)} />
          ))}
          {cols.map(([cx]) => (
            <line key={cx} x1={X(cx)} x2={X(cx)} y1={Y(top)} y2={Y(bottom)} />
          ))}
        </g>
        {children}
        <g fill="#c9cad0" fontSize="12">
          {rows.map(([y, t]) => (
            <text key={t} x={labelX} y={Y(y) + 3}>{t}</text>
          ))}
          {cols.map(([cx, t]) => (
            <text key={t} x={X(cx)} y={labelY} textAnchor="middle">{t}</text>
          ))}
        </g>
      </svg>
    </figure>
  );
}

const S1: Scale = { oy: 40, sy: 3 };
const S2: Scale = { oy: 274, sy: 3 };
const S3: Scale = { oy: 39, sy: 2.529 };
const S4: Scale = { oy: 211, sy: 2.529 };
const S5: Scale = { oy: 417, sy: 2.529 };

const tOrange = parse(
  "99,312 105,330 112,280 118,265 122,265 127,310 133,325 150,350 170,380 188,410 193,432 203,390 212,385 218,355 230,350 236,315 247,294 253,310 258,352 266,330 280,345 295,360 320,378 345,385 347,428 355,410 375,410 395,390 407,370 418,362 422,405 428,360 438,342 445,360 460,378 480,392 512,405 514,448 520,425 540,438 550,422 568,415 580,390 592,368 596,400 607,360 615,380 640,402 683,420 686,462 692,445 720,435 735,390 750,350 757,338 762,365 778,350 785,372 810,390 850,408 853,415 885,418 895,385 910,362 920,350 924,382 930,340 945,322 975,318 1005,308 1017,308 1022,345 1035,390 1055,404 1070,370 1080,355 1095,352 1103,335 1106,350 1114,325 1125,350 1150,378 1180,390 1192,388 1200,315 1207,312 1215,325 1220,360 1228,368 1240,315 1250,330 1257,312 1265,318 1274,310"
);
const tBase = parse(
  "378,486 390,468 400,452 412,450 420,465 437,444 450,460 475,474 512,482 514,505 550,504 565,488 575,470 590,450 597,466 607,454 625,474 640,484 682,498 684,530 700,517 722,500 740,472 757,454 765,466 780,452 795,476 815,486 849,488 851,498 895,496 910,475 925,462 940,472 965,478 1018,480 1020,492 1065,482 1080,462 1095,440 1105,452 1115,446 1135,460 1194,464 1197,490 1215,475 1235,455 1262,436 1268,444 1276,450"
);
const tBlue = parse(
  "378,490 400,450 422,440 428,410 437,398 445,408 455,440 470,462 490,472 512,480 514,500 560,495 570,460 575,430 588,405 594,440 600,402 610,400 620,430 632,465 650,485 683,495 700,500 735,470 750,430 762,400 765,425 778,396 785,430 800,460 820,475 850,485 880,480 905,450 915,415 923,395 927,420 940,402 950,410 965,448 990,468 1018,480 1060,480 1075,430 1085,398 1095,400 1100,392 1104,410 1110,388 1118,415 1135,445 1160,460 1195,465 1225,440 1245,420 1258,380 1266,390 1276,382"
);
const tPurple = parse(
  "514,515 560,512 590,495 600,498 618,480 624,415 630,500 650,510 668,480 676,440 685,425 695,440 705,455 720,470 760,478 800,482 832,478 840,410 846,425 852,380 858,460 875,470 885,415 892,472 915,460 925,400 935,445 960,450 990,475 1003,460 1010,405 1018,380 1025,410 1045,435 1065,452 1090,445 1130,462 1175,462 1182,420 1190,385 1196,400 1208,435 1240,438 1250,410 1258,330 1262,350 1268,318 1274,378"
);
const tCyan = parse(
  "103,441 130,442 150,447 175,456 192,463 198,470 205,455 220,448 235,450 244,438 252,428 257,445 270,434 285,438 300,444 320,456 345,462 348,478 360,486 378,486"
);
const tGreen = parse(
  "99,465 120,458 145,462 170,472 188,478 192,508 200,485 215,455 240,448 247,450 258,475 275,464 300,475 340,488 345,516 375,512 390,480 400,445 415,460 440,460"
);
const tViolet = parse(
  "103,548 122,548 130,510 145,485 165,478 185,480 193,548 205,540 215,525 235,528 250,525 258,542 280,528 290,498 320,498 345,495 348,532 365,540 385,535 420,545 453,548 460,515 475,505 512,510 515,540 545,545 570,525 600,540 617,540 625,565 635,528 683,535 690,550 730,555 750,552 785,562 795,552 805,518 850,516 853,535 880,540 900,528 922,545 945,520 1018,515 1022,535 1060,522 1100,515 1150,500 1195,490 1275,492"
);
const cluster1: [string, number][] = [
  ["#8f3bb8", 44], ["#b877d9", 38], ["#c45a8c", 32], ["#1f78c1", 27], ["#37872d", 24], ["#7eb26d", 20],
  ["#fa6400", 17], ["#e0b400", 13], ["#e24d42", 9], ["#f2cc0c", 5], ["#6ed0e0", -2],
];

const hRed = parse(
  "103,980 112,988 120,985 126,1000 140,995 165,1000 188,1010 193,1045 205,1020 220,1008 248,1006 257,1035 268,1015 285,1004 310,1018 330,1008 343,1000 348,1030 365,1025 395,1020 415,1018 420,1050 435,1022 455,1015 480,1022 510,1018 515,1042 530,1025 560,1028 590,1022 594,1048 610,1022 630,1020 655,1018 680,1025 684,1060 700,1050 730,1042 755,1032 759,1050 775,1028 795,1018 820,1020 845,1016 853,1038 880,1030 915,1028 940,1020 975,1012 1010,1018 1060,1018 1090,1020 1098,998 1120,1002 1140,998 1185,1000 1195,1020 1212,1005 1228,1025 1245,1015 1258,1030 1264,1005 1272,1045"
);
const hViolet = parse(
  "99,1056 110,1046 135,1036 188,1022 195,1075 215,1052 232,1045 237,1020 248,1030 256,1080 270,1048 300,1032 343,1020 347,1085 360,1070 385,1060 416,1052 420,1085 435,1058 480,1048 512,1040 515,1090 535,1060 590,1045 595,1085 620,1060 683,1042 686,1110 710,1075 760,1060 850,1050 856,1080 900,1060 960,1035 1050,1025 1100,1012 1185,1005 1195,1050 1225,1030 1250,1020 1272,1060"
);
const hBrown = parse(
  "103,1072 125,1064 188,1062 193,1108 205,1098 218,1078 232,1072 246,1050 253,1070 257,1118 262,1078 285,1070 343,1062 347,1106 360,1088 380,1080"
);
const hBase = parse(
  "378,1084 400,1078 418,1078 421,1118 428,1090 450,1080 480,1075 512,1074 515,1145 525,1100 545,1090 590,1076 595,1128 605,1090 640,1080 680,1074 683,1150 692,1110 715,1098 755,1078 759,1105 770,1088 800,1078 848,1068 852,1105 870,1085 900,1078 950,1058 1000,1054 1050,1058 1090,1048 1100,1035 1120,1028 1140,1038 1190,1040 1197,1060 1230,1058 1245,1042 1262,1040 1274,1048"
);
const hBlueLow = parse(
  "99,1146 107,1132 115,1144 128,1148 140,1175 155,1192 183,1200 198,1190 210,1158 225,1152 232,1140 240,1150 250,1150 257,1195 263,1155 280,1135 310,1118 342,1116 346,1198 352,1150 370,1134 417,1128 420,1192 426,1145 450,1125 480,1118 510,1114 514,1202 520,1150 545,1145 560,1128 590,1120 594,1190 600,1140 630,1128 678,1115 683,1200 690,1150 710,1138 754,1140 757,1168 765,1150 785,1138 810,1125 850,1118 854,1135 900,1128 920,1132 950,1130 985,1138 1018,1142 1030,1122 1060,1108 1090,1104 1115,1090 1150,1090 1195,1085 1203,1118 1215,1128 1235,1120 1257,1118 1266,1142 1272,1125"
);
const hBlueMid = parse(
  "376,1095 416,1095 421,1120 440,1098 490,1092 512,1088 516,1110 560,1098 590,1090 596,1125 620,1100 645,1095 680,1085 686,1140 720,1112 760,1120 800,1098 850,1095 856,1125 900,1085 920,1100 950,1100 975,1088 1020,1082 1080,1080 1115,1068 1160,1070 1190,1068 1200,1085 1240,1080 1274,1078"
);
const hPurple = parse(
  "596,1090 618,1095 624,1120 630,1070 650,1060 676,1045 683,1195 692,1100 760,1080 840,1060 850,1138 858,1125 870,1080 883,1070 885,968 888,1062 920,1060 923,990 926,1055 1000,1060 1010,1080 1018,1118 1025,1082 1060,1078 1090,1045 1150,1050 1190,1050 1200,1100 1210,1060 1250,1050 1256,975 1260,1085 1268,938 1272,1105"
);
const cluster2: [string, number][] = [
  ["#806eb7", -26], ["#508642", -20], ["#3f8f9f", -12], ["#5195ce", -8], ["#e24d42", -4], ["#f2cc0c", 2], ["#e0752d", 0], ["#d9901c", -2],
];

const pGreen = rough(
  parse(
    "99,195 104,193 108,165 112,170 122,172 125,195 190,192 195,182 205,180 212,190 222,180 228,192 235,190 238,165 242,188 248,192 310,194 316,168 328,170 332,193 360,193 366,166 372,170 376,190 384,176 388,190 425,192 470,196 490,196 496,178 500,193 528,190 536,165 544,190 568,192 572,180 576,192 643,196 648,166 656,166 662,194 690,193 694,165 700,172 706,166 712,190 760,194 806,194 812,166 820,174 824,193 865,193 869,182 873,193 975,195 982,165 988,195 1038,194 1044,174 1050,192 1090,196 1145,196 1160,188 1170,192 1186,190 1192,168 1200,188 1212,180 1222,194 1232,180 1238,192 1244,185 1250,192"
  ),
  6, 3, 4
);

const sWave = parse(
  "99,0 115,-8 130,-4 150,8 180,18 210,2 245,-8 290,8 310,5 330,14 390,6 420,2 450,8 490,16 560,12 610,6 640,8 685,22 745,-2 790,10 840,18 890,0 950,-4 990,-2 1030,14 1090,2 1130,14 1165,16 1183,-14 1200,-2 1253,-10"
);
function serverLine(base: number, k: number, spikes: Record<number, number>, seed: number, amp: number): Pt[] {
  const out: Pt[] = [];
  for (let x = 99, i = 0; x <= 1253; x += 3, i++) {
    const spike = Object.entries(spikes).find(([sx]) => Math.abs(Number(sx) - x) < 2);
    const burst = rnd(i, seed + 9) > 0.44 ? -amp * 0.9 : 0;
    out.push([x, spike ? spike[1] : base + at(sWave, x) * k + rnd(i, seed) * amp + burst]);
  }
  return out;
}

function band(x0: number, x1: number, mid: Pt[], lo: number, hi: number, seed: number, spikes: Pt[]): Pt[] {
  const out: Pt[] = [];
  for (let x = x0, i = 0; x <= x1; x += 2, i++) {
    const m = at(mid, x);
    const spike = spikes.find(([sx]) => Math.abs(sx - x) <= 1);
    const tall = rnd(i, seed + 5) > 0.1 ? 2 : 1;
    out.push([x, m + lo * (0.6 + rnd(i, seed) * 0.8)]);
    out.push([x + 1, spike ? spike[1] : m - hi * (0.5 + (rnd(i, seed + 2) + 0.5) * 0.5) * tall]);
  }
  return out;
}

const vLight: Pt[] = [
  [384, 1404],
  [627, 1188],
  [627, 1340],
  ...band(
    629, 1249,
    parse("629,1325 680,1320 720,1300 760,1303 800,1300 870,1308 920,1300 960,1310 1050,1303 1150,1302 1250,1302"),
    20, 22, 4,
    [[635, 1225], [655, 1234], [679, 1245], [717, 1258], [797, 1210], [819, 1222], [997, 1240], [1047, 1225], [1161, 1250], [1181, 1252]]
  ),
  [1251, 1404],
];
const vDark = band(
  632, 1251,
  parse("632,1400 680,1396 700,1385 730,1378 780,1366 830,1372 900,1366 960,1384 1030,1374 1100,1384 1180,1382 1251,1384"),
  12, 10, 8,
  [[717, 1300], [815, 1310], [869, 1330], [907, 1310], [953, 1350], [975, 1335], [989, 1330], [1047, 1345], [1083, 1335], [1105, 1310], [1141, 1315], [1189, 1310], [1237, 1345], [1249, 1300]]
);
const vDarkLeft = band(96, 240, parse("96,1392 130,1390 160,1384 185,1394 240,1402"), 9, 7, 12, []);

const DATES: [number, string][] = [[295, "10/16"], [631, "10/18"], [967, "10/20"]];

function Charts() {
  return (
    <section className={`${PANEL} pt-[15px] font-['Roboto']`}>
      <Chart
        title="Temperatur" height={215} s={S1} x={[99, 1277]} top={190} bottom={622} labelX={428} labelY={185}
        rows={[[190, "30 °C"], [334, "25 °C"], [478, "20 °C"], [622, "15 °C"]]} cols={DATES}
        bands={[[334, 478, "#203327"]]}
      >
        <Line pts={rough(tViolet, 4, 2)} s={S1} c="#705da0" />
        {cluster1.map(([c, off], i) => (
          <Line
            key={c}
            c={c}
            s={S1}
            w={1.3}
            pts={rough(tBase.map(([x, y]) => [x, 490 + (y - 490) * (1.1 - Math.max(0, off) * 0.016) + off * 0.9 - 4 + 5 * Math.sin(x / 60 + i * 2)] as Pt), 3, i + 3)}
          />
        ))}
        <Line pts={rough(tGreen, 3, 4)} s={S1} c="#56a64b" />
        <Line pts={rough(tBlue, 6, 5)} s={S1} c="#3274d9" />
        <Line pts={rough([...tCyan, ...tBase.slice(1).map(([x, y]) => [x, y - 3] as Pt)], 3, 6)} s={S1} c="#6ed0e0" />
        <Line pts={rough(tPurple, 5, 7)} s={S1} c="#a352cc" />
        <Line pts={parse("683,500 684,562 690,525 740,480")} s={S1} c="#e0b400" />
        <Line pts={parse("1196,470 1198,522 1206,480")} s={S1} c="#e0b400" />
        <Line pts={parse("1260,450 1265,470 1269,540 1272,465")} s={S1} c="#56a64b" />
        <Line pts={rough(tOrange, 5, 8)} s={S1} c="#ef843c" w={1.7} />
      </Chart>

      <Chart
        title="Feuchtigkeit" height={205} s={S2} x={[99, 1275]} top={892} bottom={1297} labelX={427} labelY={176}
        rows={[[952, "80%"], [1067, "60%"], [1181, "40%"], [1297, "20%"]]} cols={DATES}
        bands={[[1067, 1181, "#203327"]]}
      >
        <Line pts={rough(hBlueLow, 4, 1)} s={S2} c="#2f7db5" w={1.7} />
        <Line pts={rough(hBlueMid, 6, 2)} s={S2} c="#3274d9" />
        <Line pts={rough(hRed, 6, 3)} s={S2} c="#e24d42" />
        <Line pts={rough(hViolet, 5, 4)} s={S2} c="#705da0" />
        <Line pts={rough(hPurple, 5, 6)} s={S2} c="#a352cc" />
        {cluster2.map(([c, off], i) => (
          <Line
            key={c}
            c={c}
            s={S2}
            w={1.3}
            pts={rough(hBase.map(([x, y]) => [x, 1080 + (y - 1080) * (1 + off * 0.02) + off * 0.8 + 4 * Math.sin(x / 50 + i * 2)] as Pt), 5, i + 9)}
          />
        ))}
        <Line pts={rough(hBrown, 5, 5)} s={S2} c="#c8682c" w={1.7} />
      </Chart>

      <Chart
        title="Druck Heizung, Solar und Leitungswasser" height={152} s={S3} x={[99, 1251]} top={159} bottom={347} labelX={419} labelY={116}
        rows={[[159, "4.0 bar"], [221, "3.0 bar"], [284, "2.0 bar"], [347, "1.0 bar"]]}
        cols={[[290, "10/16"], [620, "10/18"], [949, "10/20"]]} bands={[]}
      >
        <Line pts={pGreen} s={S3} c="#56a64b" w={1.6} />
        <Line
          pts={parse("99,229 150,231 200,233 240,230 300,231 365,235 420,230 480,233 525,236 580,232 640,233 683,236 740,231 850,232 950,231 1040,232 1120,230 1190,230 1250,226")}
          s={S3} c="#f2667c" w={1.8}
        />
        <Line
          pts={parse("99,281 130,282 180,279 245,283 300,281 380,282 468,282 482,287 498,289 530,289 552,283 610,281 632,287 655,294 680,295 700,292 720,286 740,282 850,280 940,281 1000,279 1120,279 1180,281 1251,281")}
          s={S3} c="#8ab8ff" w={1.8}
        />
      </Chart>

      <Chart
        title="Temperatur Serverschrank" height={186} s={S4} x={[99, 1253]} top={594} bottom={884} labelX={421} labelY={156}
        rows={[[635, "80 °C"], [717, "60 °C"], [800, "40 °C"], [884, "20 °C"]]}
        cols={[[292, "10/16"], [622, "10/18"], [952, "10/20"]]}
        bands={[[594, 635, "#4f262d"], [635, 676, "#5a3723"], [676, 800, "#2b3c2e"]]}
      >
        <Line
          pts={rough(parse("99,840 118,832 150,845 192,858 215,842 245,834 260,843 310,845 345,853 385,850 430,843 500,855 545,857 600,846 660,855 710,858 740,842 840,855 870,854 920,840 990,838 1015,851 1040,851 1085,843 1140,850 1170,850 1183,832 1198,847 1225,838 1250,837"), 3, 2, 6)}
          s={S4} c="#c4364a" w={1.7}
        />
        <Line
          pts={rough(parse("99,785 115,780 125,782 140,796 165,800 215,796 240,782 260,796 400,798 600,798 800,796 900,794 975,782 1005,797 1055,796 1090,790 1130,797 1172,796 1186,770 1200,792 1252,786"), 6, 4, 4)}
          s={S4} c="#a352cc" w={1.7}
        />
        <Line pts={serverLine(770, 0.9, {}, 5, 7)} s={S4} c="#fff899" w={1.7} />
        <Line pts={serverLine(768, 0.1, {}, 8, 4)} s={S4} c="#c15c9e" w={1.5} />
        <Line pts={serverLine(753, 0.8, { 972: 738 }, 7, 7)} s={S4} c="#ef843c" w={1.7} />
        <Line pts={serverLine(690, 0.9, { 147: 650, 312: 650, 471: 680, 609: 676, 642: 655, 972: 648, 1131: 676 }, 6, 12)} s={S4} c="#6ed0e0" w={1.8} />
      </Chart>

      <Chart
        title="Temperatur VIS" height={184} s={S5} x={[96, 1253]} top={1115} bottom={1404} labelX={421} labelY={156}
        rows={[[1115, "100 °C"], [1197, "80 °C"], [1280, "60 °C"], [1362, "40 °C"]]}
        cols={[[287, "00:00"], [479, "04:00"], [673, "08:00"], [865, "12:00"], [1058, "16:00"], [1251, "20:00"]]}
        bands={[[1115, 1197, "#4f262d"], [1197, 1237, "#5a3723"], [1237, 1404, "#2b3c2e"]]}
      >
        <defs>
          <linearGradient id="vis" x1="0" y1="0" x2="0" y2="1">
            <stop offset="0" stopColor="#8ab8ff" stopOpacity=".6" />
            <stop offset="1" stopColor="#8ab8ff" stopOpacity=".03" />
          </linearGradient>
        </defs>
        <polygon points={toPath(vLight, S5)} fill="url(#vis)" />
        <Line pts={vDarkLeft} s={S5} c="#3274d9" />
        <Line pts={parse("615,1404 615,1375")} s={S5} c="#3274d9" />
        <Line pts={vDark} s={S5} c="#3274d9" w={1.4} />
        <Line pts={vLight} s={S5} c="#8ab8ff" w={1.5} />
      </Chart>
    </section>
  );
}

/* ---------- page ---------- */

export default function App() {
  return (
    <div className="relative min-h-screen bg-black pr-[3px] pl-0.5 font-['Liberation_Sans',Arial,sans-serif]">
      <button type="button" aria-label="Menü" className="absolute top-1 left-1 flex size-12 items-center justify-center rounded-full bg-[#5a5b5e]">
        <svg viewBox="0 0 18 14" width="18" height="14" stroke="#fff" strokeWidth="2" aria-hidden="true">
          <path d="M0 2h18M0 7h18M0 12h18" />
        </svg>
      </button>

      <main className="grid grid-cols-[1178fr_204fr_472fr] gap-x-[21px] bg-[#222428] pt-1 pr-[11px] pb-2 pl-2">
        <div className="grid grid-cols-[483fr_672fr] content-between gap-x-[23px] gap-y-[21px]">
          <div className="grid grid-cols-[251fr_211fr] gap-x-[21px]">
            <LeftColumn />
            <section className={`${PANEL} pt-[5px] pb-[9px]`}>
              <Heading>Allgemein</Heading>
              <div className="mt-[11px] mr-px grid grid-cols-[60px_60px_60px] justify-center gap-x-1.5 gap-y-[15px]">
                {general.map(([name, icon, text, weight]) => (
                  <Tile key={name} tone="none" label={name}>
                    {icon}
                    {text && <span className={`text-[13px] leading-[14px] whitespace-nowrap ${weight ?? ""}`}>{text}</span>}
                  </Tile>
                ))}
              </div>
            </section>
          </div>

          <div className="grid grid-cols-[342fr_143fr_143fr] gap-x-[22px]">
            <section className={`${PANEL} pt-[5px] pb-[9px]`}>
              <Heading>Status</Heading>
              <div className="mt-[11px] grid grid-cols-[repeat(5,60px)] justify-center gap-x-1.5 gap-y-[15px]">
                {status.map(([name, tone, icon]) => (
                  <Tile key={name} tone={tone} label={name}>{icon}</Tile>
                ))}
              </div>
            </section>
            <RolloPanel floor="EG" sunTone="red" />
            <RolloPanel floor="DG" sunTone="green" />
          </div>

          <section className={`${PANEL} pt-[11px] pb-px`}>
            <Heading>Beleuchtung</Heading>
            <ul className={`${LIST} mr-[7px] ml-3.5`}>
              {lights.map(([a, on, b]) => (
                <li key={a} className="grid h-11 grid-cols-2 pr-1.5">
                  <LightCell name={a} on={on} />
                  <LightCell name={b} on={false} />
                </li>
              ))}
            </ul>
          </section>

          <section className={`${PANEL} pt-[11px] pb-px`}>
            <Heading>Fenster und Rollo Status</Heading>
            <ul className={`${LIST} mr-[7px] ml-[13px]`}>
              {windows.map(([a, pct, b, door, extra]) => (
                <li key={a} className="grid h-11 grid-cols-2 pr-2">
                  <WindowCell name={a} pct={pct} door={door} />
                  <WindowCell name={b} pct="0%" extra={extra} />
                </li>
              ))}
            </ul>
          </section>
        </div>

        <Gauges />
        <Charts />
      </main>
    </div>
  );
}
